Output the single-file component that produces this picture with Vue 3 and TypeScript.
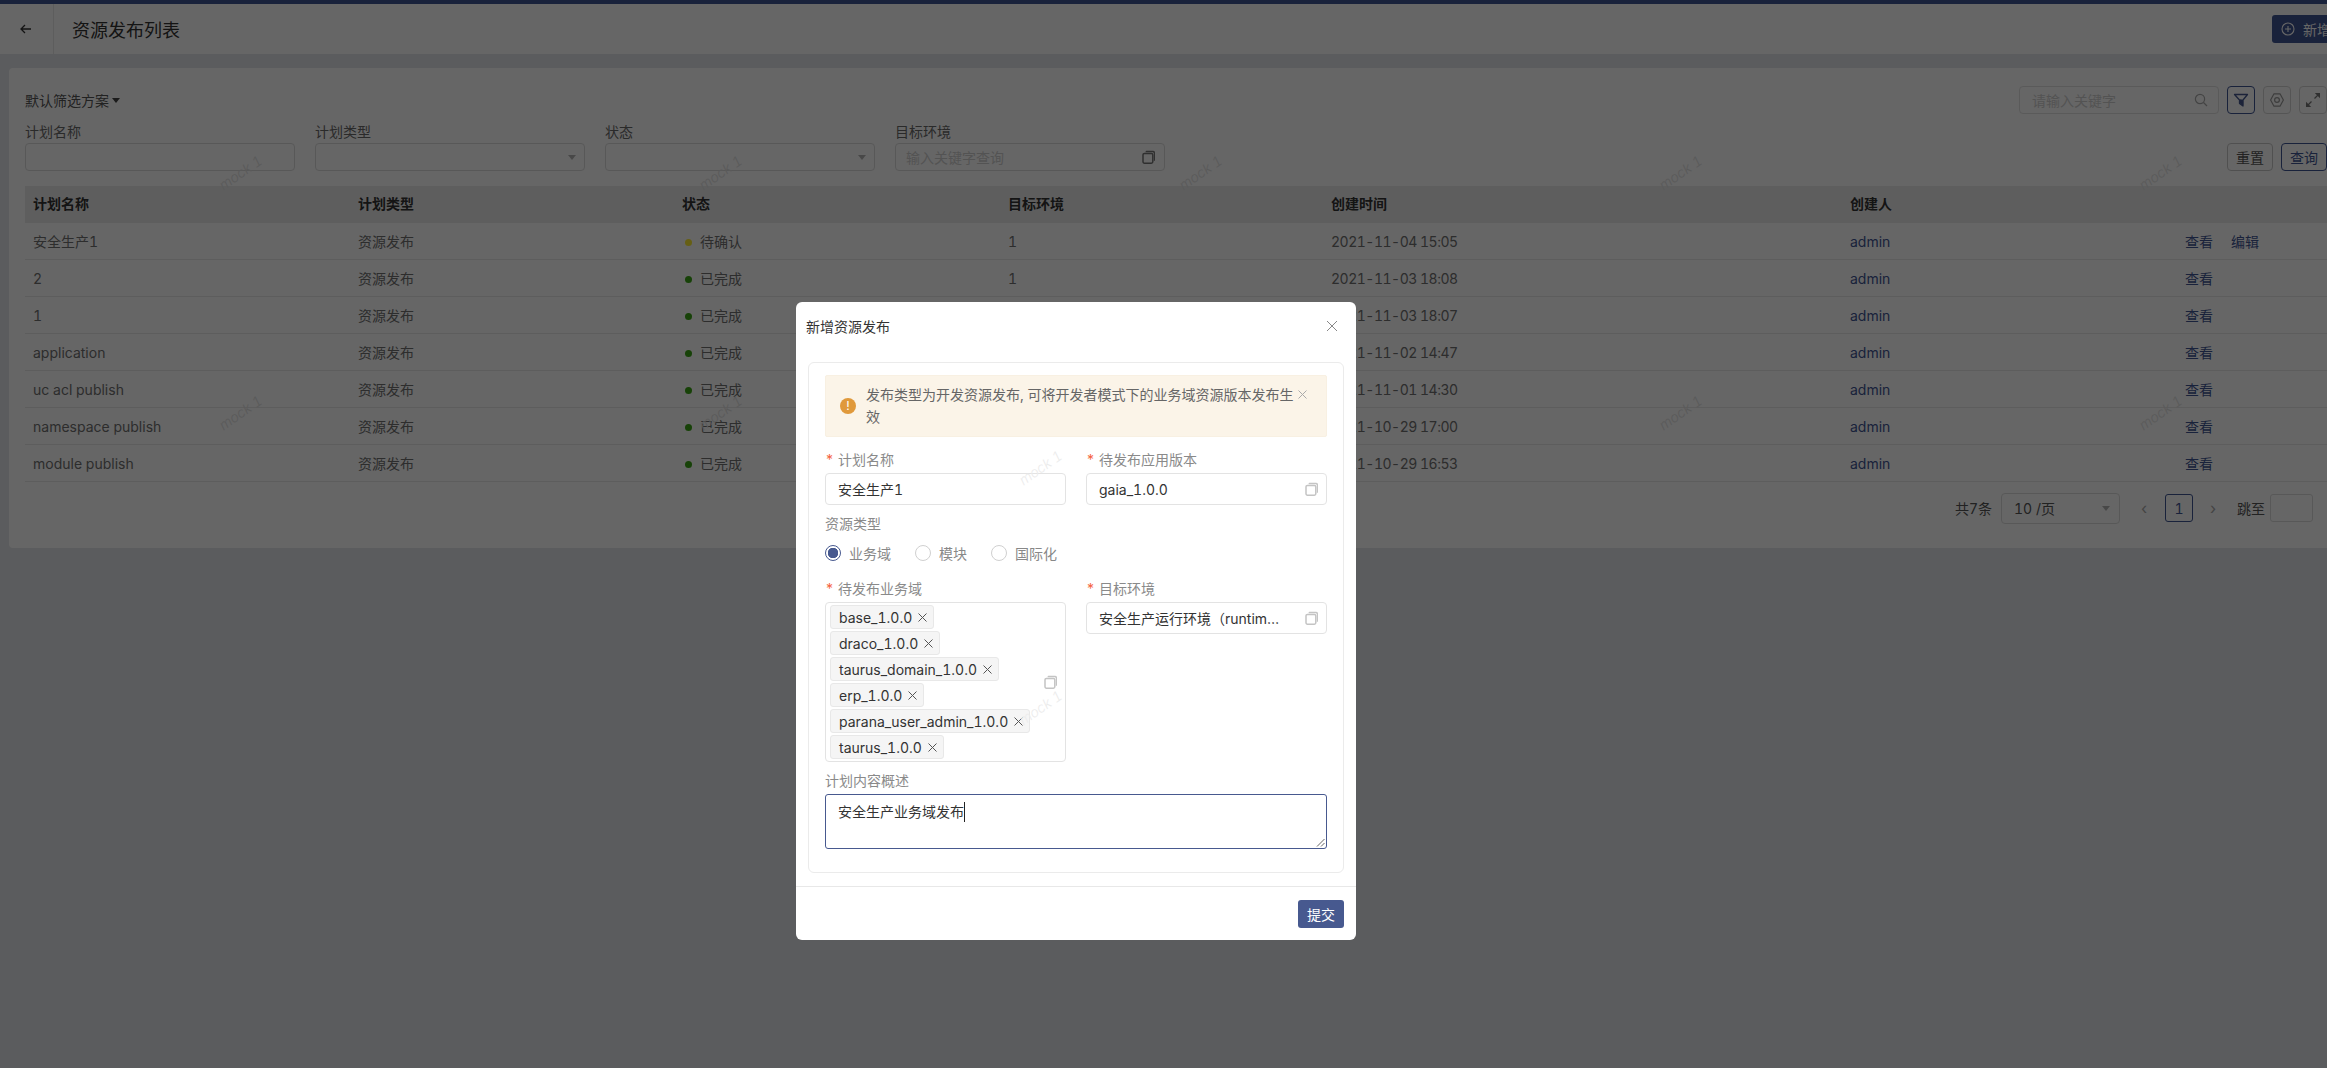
<script setup lang="ts">
interface Row { name: string; status: string; ok: boolean; time: string; edit?: boolean }
const rows: Row[] = [
  { name: '安全生产1', status: '待确认', ok: false, time: '2021-11-04 15:05', edit: true },
  { name: '2', status: '已完成', ok: true, time: '2021-11-03 18:08' },
  { name: '1', status: '已完成', ok: true, time: '2021-11-03 18:07' },
  { name: 'application', status: '已完成', ok: true, time: '2021-11-02 14:47' },
  { name: 'uc acl publish', status: '已完成', ok: true, time: '2021-11-01 14:30' },
  { name: 'namespace publish', status: '已完成', ok: true, time: '2021-10-29 17:00' },
  { name: 'module publish', status: '已完成', ok: true, time: '2021-10-29 16:53' },
]
const cols = ['计划名称', '计划类型', '状态', '目标环境', '创建时间', '创建人', '']
const widths = [325, 324, 326, 323, 519, 335, 150]
const tags = ['base_1.0.0', 'draco_1.0.0', 'taurus_domain_1.0.0', 'erp_1.0.0', 'parana_user_admin_1.0.0', 'taurus_1.0.0']
const radios = ['业务域', '模块', '国际化']
</script>

<template>
  <div class="viewport">
    <div class="page">
      <div class="topbar"></div>
      <header class="header">
        <div class="back">
          <svg width="14" height="14" viewBox="0 0 14 14" fill="none" stroke="#333" stroke-width="1.3"><path d="M12 7H2M6 3L2 7l4 4" /></svg>
        </div>
        <h1 class="title">资源发布列表</h1>
        <button class="add-btn">
          <svg width="14" height="14" viewBox="0 0 14 14" fill="none" stroke="#fff" stroke-width="1.1"><circle cx="7" cy="7" r="6" /><path d="M7 4v6M4 7h6" /></svg>
          <span>新增</span>
        </button>
      </header>

      <section class="panel">
        <div class="toolbar">
          <span class="scheme">默认筛选方案<i class="caret dark"></i></span>
          <div class="tools">
            <div class="search">
              <span class="ph">请输入关键字</span>
              <svg width="14" height="14" viewBox="0 0 14 14" fill="none" stroke="#aaa" stroke-width="1.2"><circle cx="6" cy="6" r="4.6" /><path d="M9.5 9.5L13 13" /></svg>
            </div>
            <button class="icon-btn active">
              <svg width="16" height="16" viewBox="0 0 16 16" fill="none" stroke="#47598f" stroke-width="1.3" stroke-linejoin="round"><path d="M1.5 2.5h13L10 8v6L6.5 11.5V8z" /><path d="M9.5 8.5V13L7.5 11V8z" fill="#47598f" /></svg>
            </button>
            <button class="icon-btn">
              <svg width="16" height="16" viewBox="0 0 16 16" fill="none" stroke="#999" stroke-width="1.2" stroke-linejoin="round"><path d="M5 1.8h6L14.4 8 11 14.2H5L1.6 8z" /><circle cx="8" cy="8" r="2.4" /></svg>
            </button>
            <button class="icon-btn">
              <svg width="16" height="16" viewBox="0 0 16 16" fill="#777" stroke="#777" stroke-width="1.3"><path d="M9.5 6.5L14 2M2 14l4.5-4.5" fill="none" /><path d="M9.8 1h5.2v5.2zM1 9.8V15h5.2z" stroke="none" /></svg>
            </button>
          </div>
        </div>

        <div class="filters">
          <label class="f-field"><span>计划名称</span><div class="box"></div></label>
          <label class="f-field"><span>计划类型</span><div class="box sel"><i class="caret"></i></div></label>
          <label class="f-field"><span>状态</span><div class="box sel"><i class="caret"></i></div></label>
          <label class="f-field">
            <span>目标环境</span>
            <div class="box sel">
              <span class="ph">输入关键字查询</span>
              <svg class="copy" width="14" height="14" viewBox="0 0 14 14"><path d="M3.5 2.2c0-.9.6-1.4 1.4-1.4h6.4c1 0 1.7.7 1.7 1.7v7.2c0 .8-.5 1.3-1.2 1.3V3.6c0-.9-.5-1.4-1.4-1.4z" fill="#777" /><rect x="1" y="3.4" width="9.8" height="9.8" rx="1.4" fill="none" stroke="#777" stroke-width="1.5" /></svg>
            </div>
          </label>
          <div class="f-actions">
            <button class="btn">重置</button>
            <button class="btn primary">查询</button>
          </div>
        </div>

        <table class="table">
          <colgroup><col v-for="(w, i) in widths" :key="i" :style="{ width: w + 'px' }" /></colgroup>
          <thead><tr><th v-for="c in cols" :key="c">{{ c }}</th></tr></thead>
          <tbody>
            <tr v-for="r in rows" :key="r.time">
              <td>{{ r.name }}</td>
              <td>资源发布</td>
              <td><i class="dot" :class="r.ok ? 'ok' : 'wait'"></i>{{ r.status }}</td>
              <td>1</td>
              <td class="time">{{ r.time }}</td>
              <td class="link">admin</td>
              <td class="link ops"><a>查看</a><a v-if="r.edit">编辑</a></td>
            </tr>
          </tbody>
        </table>

        <div class="pager">
          <span>共7条</span>
          <div class="p-select"><span>10 /页</span><i class="caret"></i></div>
          <span class="arrow first">‹</span>
          <span class="p-num">1</span>
          <span class="arrow">›</span>
          <span class="jump">跳至</span>
          <div class="p-input"></div>
        </div>
      </section>

      <div class="marks">
        <span v-for="n in 10" :key="n" class="mark">mock 1</span>
      </div>
    </div>

    <div class="mask"></div>

    <div class="modal">
      <div class="m-head">
        <span>新增资源发布</span>
        <svg width="12" height="12" viewBox="0 0 12 12" stroke="#888" stroke-width="1" fill="none"><path d="M1 1l10 10M11 1L1 11" /></svg>
      </div>
      <div class="m-body">
        <div class="card">
          <div class="alert">
            <span class="alert-icon">!</span>
            <p>发布类型为开发资源发布, 可将开发者模式下的业务域资源版本发布生效</p>
            <svg class="alert-x" width="9" height="9" viewBox="0 0 9 9" stroke="#aaa" fill="none"><path d="M.5.5l8 8M8.5.5l-8 8" /></svg>
          </div>

          <div class="two">
            <div class="field">
              <div class="lab"><em>*</em>计划名称</div>
              <div class="input">安全生产1</div>
            </div>
            <div class="field">
              <div class="lab"><em>*</em>待发布应用版本</div>
              <div class="input">
                <span class="val">gaia_1.0.0</span>
                <svg class="copy" width="14" height="14" viewBox="0 0 14 14"><path d="M3.5 2.2c0-.9.6-1.4 1.4-1.4h6.4c1 0 1.7.7 1.7 1.7v7.2c0 .8-.5 1.3-1.2 1.3V3.6c0-.9-.5-1.4-1.4-1.4z" fill="#c4c4c4" /><rect x="1" y="3.4" width="9.8" height="9.8" rx="1.4" fill="none" stroke="#c4c4c4" stroke-width="1.5" /></svg>
              </div>
            </div>
          </div>

          <div class="lab type-lab">资源类型</div>
          <div class="radios">
            <span v-for="(r, i) in radios" :key="r" class="radio">
              <i class="ring" :class="{ on: i === 0 }"></i>{{ r }}
            </span>
          </div>

          <div class="two domain">
            <div class="field">
              <div class="lab"><em>*</em>待发布业务域</div>
              <div class="multi">
                <div class="tags">
                  <span v-for="t in tags" :key="t" class="tag">
                    {{ t }}
                    <svg width="9" height="9" viewBox="0 0 9 9" stroke="#555" fill="none"><path d="M.5.5l8 8M8.5.5l-8 8" /></svg>
                  </span>
                </div>
                <svg class="copy" width="14" height="14" viewBox="0 0 14 14"><path d="M3.5 2.2c0-.9.6-1.4 1.4-1.4h6.4c1 0 1.7.7 1.7 1.7v7.2c0 .8-.5 1.3-1.2 1.3V3.6c0-.9-.5-1.4-1.4-1.4z" fill="#c4c4c4" /><rect x="1" y="3.4" width="9.8" height="9.8" rx="1.4" fill="none" stroke="#c4c4c4" stroke-width="1.5" /></svg>
              </div>
            </div>
            <div class="field">
              <div class="lab"><em>*</em>目标环境</div>
              <div class="input">
                <span class="val ell">安全生产运行环境（runtime）</span>
                <svg class="copy" width="14" height="14" viewBox="0 0 14 14"><path d="M3.5 2.2c0-.9.6-1.4 1.4-1.4h6.4c1 0 1.7.7 1.7 1.7v7.2c0 .8-.5 1.3-1.2 1.3V3.6c0-.9-.5-1.4-1.4-1.4z" fill="#c4c4c4" /><rect x="1" y="3.4" width="9.8" height="9.8" rx="1.4" fill="none" stroke="#c4c4c4" stroke-width="1.5" /></svg>
              </div>
            </div>
          </div>

          <div class="lab desc-lab">计划内容概述</div>
          <div class="area">
            <span>安全生产业务域发布</span><i class="cursor"></i>
            <svg class="grip" width="9" height="9" viewBox="0 0 9 9" stroke="#666" fill="none"><path d="M1 8.5L8.5 1M5 8.5L8.5 5" /></svg>
          </div>
        </div>
      </div>
      <div class="m-foot"><button class="submit">提交</button></div>
      <div class="m-marks">
        <span class="mark">mock 1</span>
        <span class="mark">mock 1</span>
      </div>
    </div>
  </div>
</template>

<style>
html, body { margin: 0; overflow: hidden; }
</style>

<style scoped>
.viewport {
  position: relative;
  width: 100vw;
  height: 100vh;
  overflow: hidden;
  background: #e4e6ea;
  font-family: Inter, "Noto Sans CJK SC", sans-serif;
  font-size: 14px;
  font-variant-numeric: tabular-nums;
  color: #666;
}
.page { position: relative; width: 2352px; }
.topbar { height: 4px; background: #3f5593; }
.header {
  height: 50px;
  background: #fff;
  display: flex;
  align-items: center;
}
.back {
  width: 54px;
  height: 100%;
  border-right: 1px solid #e8e8e8;
  display: flex;
  align-items: center;
  padding-left: 19px;
  box-sizing: border-box;
}
.title { margin: 0 0 0 18px; font-size: 18px; font-weight: 400; color: #333; flex: 1; }
.add-btn {
  width: 80px;
  height: 28px;
  border: 0;
  border-radius: 3px;
  background: #3f5593;
  color: #fff;
  font: inherit;
  display: flex;
  align-items: center;
  gap: 8px;
  padding: 0 0 0 9px;
}
.panel {
  margin: 14px 9px 0;
  height: 480px;
  box-sizing: border-box;
  background: #fff;
  border-radius: 4px;
  padding: 18px 16px 0;
}
.toolbar { display: flex; justify-content: space-between; align-items: center; height: 28px; }
.scheme { color: #555; display: flex; align-items: center; }
.tools { display: flex; gap: 8px; align-items: center; }
.search {
  width: 200px;
  height: 28px;
  box-sizing: border-box;
  border: 1px solid #e0e0e0;
  border-radius: 4px;
  display: flex;
  align-items: center;
  justify-content: space-between;
  padding: 0 10px 0 12px;
}
.ph { color: #d0d0d0; }
.icon-btn {
  width: 28px;
  height: 28px;
  padding: 0;
  border: 1px solid #d5d5d5;
  border-radius: 4px;
  background: #fff;
  display: flex;
  align-items: center;
  justify-content: center;
}
.icon-btn.active { border-color: #3f5593; }
.caret {
  display: inline-block;
  width: 0;
  height: 0;
  border: 4px solid transparent;
  border-top: 5px solid #b5b5b5;
  border-bottom: 0;
}
.caret.dark { border-top-color: #444; margin-left: 3px; }
.filters { display: flex; margin-top: 9px; gap: 20px; align-items: flex-end; }
.f-field { width: 270px; display: flex; flex-direction: column; gap: 2px; }
.f-field > span { line-height: 18px; color: #6a6a6a; }
.box {
  height: 28px;
  box-sizing: border-box;
  border: 1px solid #dcdcdc;
  border-radius: 4px;
  display: flex;
  align-items: center;
  padding: 0 8px 0 10px;
}
.box.sel { justify-content: flex-end; }
.box.sel .ph { margin-right: auto; }
.f-actions { margin-left: auto; display: flex; gap: 8px; }
.btn {
  height: 28px;
  width: 46px;
  padding: 0;
  font: inherit;
  border: 1px solid #c9c9c9;
  border-radius: 4px;
  background: #fff;
  color: #555;
}
.btn.primary { border-color: #3f5593; color: #3f5593; }
.table { width: 2302px; margin-top: 15px; border-collapse: collapse; table-layout: fixed; }
.table th, .table td { padding: 0 8px; text-align: left; }
.table th { box-sizing: border-box; height: 37px; padding-bottom: 3px; background: #ececec; color: #333; font-weight: 600; }
.table td { height: 36px; border-bottom: 1px solid #e8e8e8; color: #707070; }
.table td.time { letter-spacing: -0.5px; }
.table td.link { color: #3f5593; }
.ops a { margin-right: 18px; }
.dot { display: inline-block; width: 7px; height: 7px; border-radius: 50%; margin: 0 8px 1px 3px; vertical-align: middle; }
.dot.ok { background: #3aa514; }
.dot.wait { background: #ffee33; }
.pager {
  display: flex;
  justify-content: flex-end;
  align-items: center;
  padding-right: 14px;
  margin-top: 10px;
  color: #555;
  height: 32px;
}
.p-select {
  width: 119px;
  height: 31px;
  box-sizing: border-box;
  margin: 0 19px 0 9px;
  border: 1px solid #dcdcdc;
  border-radius: 4px;
  display: flex;
  align-items: center;
  justify-content: space-between;
  padding: 0 9px 0 12px;
}
.arrow { color: #aaa; width: 10px; text-align: center; font-size: 16px; line-height: 1; }
.arrow.first { margin-right: 16px; }
.p-num {
  width: 28px;
  height: 28px;
  box-sizing: border-box;
  border: 1px solid #3f5593;
  border-radius: 3px;
  color: #3f5593;
  display: flex;
  align-items: center;
  justify-content: center;
  margin-right: 15px;
}
.jump { margin-left: 19px; margin-right: 5px; }
.p-input { width: 43px; height: 28px; box-sizing: border-box; border: 1px solid #dcdcdc; border-radius: 3px; }
.marks {
  position: absolute;
  left: 0;
  top: 52px;
  display: grid;
  grid-template-columns: repeat(5, 480px);
  grid-auto-rows: 240px;
  pointer-events: none;
}
.mark {
  display: flex;
  align-items: center;
  justify-content: center;
  transform: rotate(-35deg);
  color: #e2e2e2;
  font-size: 14px;
  font-weight: 300;
  font-style: italic;
}
.mask { position: absolute; inset: 0; background: rgba(0, 0, 0, 0.6); }

.modal {
  position: absolute;
  left: 796px;
  top: 302px;
  width: 560px;
  height: 638px;
  background: #fff;
  border-radius: 6px;
  display: flex;
  flex-direction: column;
  color: #333;
}
.m-head {
  height: 48px;
  flex: none;
  display: flex;
  align-items: center;
  justify-content: space-between;
  padding: 0 18px 0 10px;
}
.m-body { flex: 1; padding: 12px 12px 0; }
.card {
  height: 511px;
  box-sizing: border-box;
  border: 1px solid #ebebeb;
  border-radius: 6px;
  padding: 12px 16px;
}
.alert {
  position: relative;
  height: 62px;
  box-sizing: border-box;
  background: #fbf4e8;
  border: 1px solid #f8f0e2;
  border-radius: 2px;
  display: flex;
  align-items: center;
  padding: 0 28px 0 14px;
  gap: 10px;
}
.alert p { margin: 0; line-height: 22px; color: #666; }
.alert-icon {
  flex: none;
  width: 16px;
  height: 16px;
  border-radius: 50%;
  background: #e0993b;
  color: #fff;
  font-size: 12px;
  line-height: 16px;
  text-align: center;
}
.alert-x { position: absolute; right: 19px; top: 14px; }
.two { display: flex; gap: 20px; margin-top: 13px; }
.field { width: 241px; }
.lab { line-height: 20px; color: #8a8a8a; }
.lab em { color: #f5633d; font-style: normal; margin-right: 4px; }
.input {
  height: 32px;
  box-sizing: border-box;
  margin-top: 3px;
  border: 1px solid #e3e3e3;
  border-radius: 4px;
  padding: 0 7px 0 12px;
  display: flex;
  align-items: center;
  justify-content: space-between;
  color: #333;
}
.val { min-width: 0; }
.ell { width: 188px; white-space: nowrap; overflow: hidden; text-overflow: ellipsis; }
.copy { flex: none; }
.type-lab { margin-top: 9px; }
.radios { display: flex; gap: 16px; margin-top: 9px; height: 20px; align-items: center; }
.radio { display: flex; align-items: center; gap: 8px; color: #888; margin-right: 8px; }
.ring { width: 16px; height: 16px; box-sizing: border-box; border: 1px solid #d0d0d0; border-radius: 50%; }
.ring.on { border-color: #47598f; background: radial-gradient(circle, #47598f 0 5px, #fff 5.5px); }
.domain { margin-top: 16px; }
.multi {
  margin-top: 3px;
  height: 160px;
  box-sizing: border-box;
  border: 1px solid #e3e3e3;
  border-radius: 4px;
  display: flex;
  align-items: center;
  justify-content: space-between;
  padding: 2px 7px 2px 4px;
}
.tags { display: flex; flex-direction: column; align-items: flex-start; gap: 2px; }
.tag {
  height: 24px;
  box-sizing: border-box;
  display: flex;
  align-items: center;
  gap: 6px;
  padding: 0 6px 0 8px;
  background: #f5f5f5;
  border: 1px solid #e8e8e8;
  border-radius: 3px;
  color: #333;
  white-space: nowrap;
}
.desc-lab { margin-top: 9px; }
.area {
  position: relative;
  margin-top: 3px;
  height: 55px;
  box-sizing: border-box;
  border: 1px solid #47598f;
  border-radius: 3px;
  padding: 7px 12px;
  line-height: 20px;
  color: #333;
  display: flex;
  align-items: flex-start;
}
.cursor { width: 1px; height: 20px; background: #222; }
.grip { position: absolute; right: 1px; bottom: 1px; }
.m-foot {
  height: 53px;
  flex: none;
  border-top: 1px solid #e8e8e8;
  display: flex;
  justify-content: flex-end;
  align-items: center;
  padding-right: 12px;
}
.submit {
  width: 46px;
  height: 28px;
  padding: 0;
  border: 0;
  border-radius: 3px;
  background: #47598f;
  color: #fff;
  font: inherit;
}
.m-marks {
  position: absolute;
  left: 184px;
  top: 45px;
  width: 120px;
  display: grid;
  grid-auto-rows: 240px;
  pointer-events: none;
}
.m-marks .mark { color: #ececec; }
</style>
